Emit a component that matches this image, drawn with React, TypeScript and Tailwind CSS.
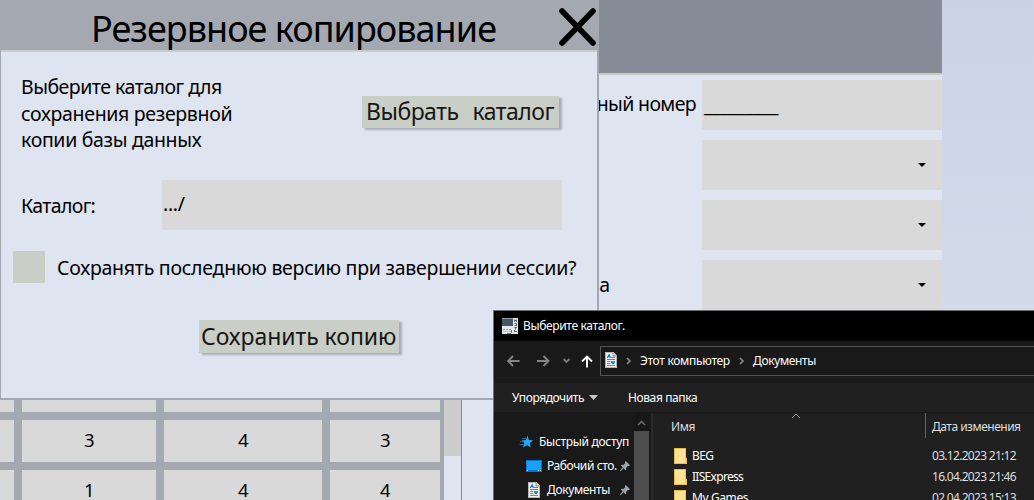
import type { ReactNode } from "react";

function Field({ label, children }: { label?: string; children?: ReactNode }) {
  return (
    <div className="flex h-[50px] items-center justify-end">
      <span className="mr-[6px] pb-[2px] text-[19.5px] leading-[26px] tracking-[-0.65px] whitespace-nowrap">{label}</span>
      <div className="flex h-[50px] w-[240px] shrink-0 items-center bg-[#d9d9d9]">{children}</div>
    </div>
  );
}

function SelectArrow() {
  return (
    <svg className="mr-4 ml-auto" width="8" height="4" viewBox="0 0 8 4" aria-hidden="true">
      <path d="M0 0H8L4 4Z" fill="#000" />
    </svg>
  );
}

function Row({ values }: { values: string[] }) {
  return (
    <div className="flex h-[42px] shrink-0 gap-2">
      <div className="w-[14px] bg-[#d9d9d9]" />
      <Cell width="w-[134px]" value={values[0]} />
      <Cell width="w-[158px]" value={values[1]} />
      <Cell width="w-[110px]" value={values[2]} />
    </div>
  );
}

function Cell({ width, value }: { width: string; value?: string }) {
  return (
    <div className={`${width} bg-[#d9d9d9] text-center text-[18.5px] leading-[40px] tracking-[-0.5px]`}>{value}</div>
  );
}

function DocIcon({ className }: { className?: string }) {
  return (
    <svg className={className} width="12" height="16" viewBox="0 0 12 16" aria-hidden="true">
      <path d="M0 0H8.5L12 3.5V16H0Z" fill="#f4f4f4" />
      <path d="M0.5 0.5H8.3L11.5 3.7V15.5H0.5Z" fill="none" stroke="#b5b5b5" />
      <path d="M8 0.5V4H11.5" fill="#dcdcdc" stroke="#8c8c8c" />
      <path d="M2.2 6L4.2 2.5L5.4 6M3 4.8H5" fill="none" stroke="#1476c6" strokeWidth="1.1" />
      <path d="M6 5.5H10M2 7.5H10" stroke="#2b8fdc" />
      <path d="M2 9.5H5.5M2 11.5H5.5M2 13.5H10" stroke="#7b8793" />
      <path d="M6 9H10V11H6Z" fill="#2d9be0" />
      <path d="M6 12L8 10.5L10 12Z" fill="#45684b" />
    </svg>
  );
}

function FolderIcon() {
  return (
    <svg className="mr-[5px]" width="13" height="16" viewBox="0 0 13 16" aria-hidden="true">
      <path d="M0 0H12V9.5L13 10.5V16H0Z" fill="#e8bd4e" />
      <path d="M1 1H11.2V15H1Z" fill="#ffe393" />
      <path d="M11 10.5H12.5V15.5H10.5Z" fill="#f6cf65" />
    </svg>
  );
}

function Pin() {
  return (
    <svg className="shrink-0" width="10" height="10" viewBox="0 0 10 10" aria-hidden="true">
      <path d="M5.8 0L10 4.2L9 5L8 4.8L6.2 6.7L6.3 8.5L5.5 9.2L0.9 4.5L1.7 3.8L3.4 3.9L5.3 2L5 0.9Z" fill="#9aa5ae" />
      <path d="M3.5 6.5L0.2 9.8" stroke="#9aa5ae" strokeWidth="1.1" />
    </svg>
  );
}

function AppIcon() {
  return (
    <svg width="16" height="16" viewBox="0 0 16 16" aria-hidden="true">
      <path d="M0 0H16V16H0Z" fill="#e3e9ef" />
      <path d="M0 1H11V8H0Z" fill="#445765" />
      <path d="M0 0.5H11" stroke="#8e9ba6" />
      <path d="M1 11.5H3M4 11.5H6M7 11.5H9" stroke="#a0957e" />
      <path d="M1 13.5H9" stroke="#b3c1d1" />
      <path d="M12.5 1.5V4M14.5 1.5V4M12.5 2.5H15M12.5 5.5H15M14.5 5.5V7.5M12.5 7.5H15M12.5 9.5H15M13.5 9.5V11.5M12.5 12V14M12.5 13.5H15" stroke="#5b6874" fill="none" />
      <path d="M9.5 12V15M5 15.5H9" stroke="#6d7984" />
    </svg>
  );
}

function FileRow({ name, date, tracking }: { name: string; date: string; tracking: string }) {
  return (
    <div className="flex h-[21px] shrink-0 items-center pl-[21px] text-white">
      <FolderIcon />
      <span className={`w-[240px] ${tracking}`}>{name}</span>
      <span className="tracking-[-0.7px] text-[#dedede]">{date}</span>
    </div>
  );
}

function CatalogDialog() {
  return (
    <section className="absolute top-[310px] left-[493px] flex h-[190px] w-[541px] flex-col overflow-hidden border-t border-l border-[#6c6f73] bg-[#191919] text-[12px] leading-[16px] whitespace-nowrap text-white">
      <header className="flex h-[30px] shrink-0 items-center bg-black pl-2">
        <AppIcon />
        <span className="ml-[5px] tracking-[-0.35px]">Выберите каталог.</span>
      </header>
      <nav className="flex h-[42px] shrink-0 items-center pb-[2px]">
        <svg className="ml-[13px]" width="64" height="16" viewBox="0 0 64 16" fill="none" aria-hidden="true">
          <path d="M12.5 8H1M6 3L1 8L6 13" stroke="#858585" strokeWidth="1.9" />
          <path d="M30 8H41.5M36.5 3L41.5 8L36.5 13" stroke="#858585" strokeWidth="1.9" />
          <path d="M56.5 6L59.5 9L62.5 6" stroke="#757575" strokeWidth="1.9" />
        </svg>
        <svg className="ml-[10px]" width="12" height="16" viewBox="0 0 12 16" fill="none" aria-hidden="true">
          <path d="M6 14.5V3.5M1 8.5L6 3.5L11 8.5" stroke="#fff" strokeWidth="1.9" />
        </svg>
        <div className="ml-[7px] flex h-[30px] flex-1 items-center border border-r-0 border-[#535353] pl-1">
          <DocIcon className="-mt-[2px]" />
          <svg className="ml-[9px]" width="6" height="8" viewBox="0 0 6 8" fill="none" aria-hidden="true">
            <path d="M1 1L4 4L1 7" stroke="#8a8a8a" strokeWidth="1.6" />
          </svg>
          <span className="ml-[8px] w-[90px] tracking-[-0.3px]">Этот компьютер</span>
          <svg className="ml-[9px]" width="6" height="8" viewBox="0 0 6 8" fill="none" aria-hidden="true">
            <path d="M1 1L4 4L1 7" stroke="#8a8a8a" strokeWidth="1.6" />
          </svg>
          <span className="ml-[8px] tracking-[-0.35px]">Документы</span>
        </div>
      </nav>
      <div className="flex h-[30px] shrink-0 items-center border-b border-[#181818] bg-[#202020] pl-[18px]">
        <span className="w-[77px] tracking-[-0.42px]">Упорядочить</span>
        <svg width="9" height="5" viewBox="0 0 9 5" aria-hidden="true">
          <path d="M0 0H9L4.5 5Z" fill="#c8c8c8" />
        </svg>
        <span className="ml-[30px] tracking-[-0.4px]">Новая папка</span>
      </div>
      <div className="flex min-h-0 flex-1">
        <aside className="flex w-[140px] flex-col pt-[17px]">
          <div className="flex h-6 shrink-0 items-center pl-[25px]">
            <svg width="15" height="14" viewBox="0 0 15 14" aria-hidden="true">
              <path d="M8.6 0.5L9.8 5L14.3 5.2L10.8 8L11.8 12.5L8.2 10.2L4 12.5L5.5 8.3L2.5 5.4L7 5Z" fill="#2aa5f2" />
              <path d="M3 3.5H7M1 6.5H5M0.5 9.5H5" stroke="#167bc4" strokeWidth="0.8" />
            </svg>
            <span className="ml-[5px] tracking-[-0.3px]">Быстрый доступ</span>
          </div>
          <div className="flex h-6 shrink-0 items-center pl-8">
            <svg className="shrink-0" width="16" height="12" viewBox="0 0 16 12" aria-hidden="true">
              <path d="M0 0H16V12H0Z" fill="#0877d4" />
              <path d="M1 1H15V10H1Z" fill="#1ba0f8" />
              <path d="M1 10.5H2M12 10.5H13M14 10.5H15" stroke="#dff1ff" />
            </svg>
            <span className="ml-[5px] w-[73px] shrink-0 tracking-[-0.4px]">Рабочий сто.</span>
            <Pin />
          </div>
          <div className="flex h-6 shrink-0 items-center pl-[34px]">
            <DocIcon className="shrink-0" />
            <span className="ml-[7px] w-[73px] shrink-0 tracking-[-0.35px]">Документы</span>
            <Pin />
          </div>
        </aside>
        <div className="flex w-[15px] flex-col bg-[#171717]">
          <svg className="mt-[7px] mb-[5px] ml-[3px]" width="9" height="6" viewBox="0 0 9 6" fill="none" aria-hidden="true">
            <path d="M1 5L4.5 1.5L8 5" stroke="#686868" strokeWidth="1.7" />
          </svg>
          <div className="flex-1 bg-[#4d4d4d]" />
        </div>
        <div className="ml-[2px] w-[2px] bg-[#2b2b2b]" />
        <div className="flex flex-1 flex-col bg-[#202020]">
          <div className="flex h-[32px] shrink-0 text-[#dedede]">
            <span className="w-[138px] pt-[6px] pl-[18px] tracking-[-0.4px]">Имя</span>
            <svg width="10" height="6" viewBox="0 0 10 6" fill="none" aria-hidden="true">
              <path d="M1 5L5 1L9 5" stroke="#999" />
            </svg>
            <span className="ml-[124px] h-[25px] border-l border-[#636363] pt-[6px] pl-[6px] tracking-[-0.5px]">Дата изменения</span>
          </div>
          <FileRow name="BEG" date="03.12.2023 21:12" tracking="tracking-[-0.6px]" />
          <FileRow name="IISExpress" date="16.04.2023 21:46" tracking="tracking-[-0.7px]" />
          <FileRow name="My Games" date="02.04.2023 15:13" tracking="tracking-[-0.4px]" />
        </div>
      </div>
    </section>
  );
}

function BackupModal() {
  return (
    <section className="absolute top-0 left-0 flex h-[400px] w-[599px] flex-col border-r-2 border-b-2 border-l border-[#a4a8b1] bg-[#dee4f0]">
      <header className="flex h-[52px] shrink-0 items-start justify-between overflow-hidden border-b-2 border-[#c9cdc6] bg-[#a4a8b1]">
        <h1 className="ml-[90px] text-[36px] leading-[58px] tracking-[-0.97px] whitespace-nowrap">Резервное копирование</h1>
        <svg className="mt-[8px] -mr-px shrink-0" width="40" height="38" viewBox="0 0 40 38" aria-hidden="true">
          <path d="M4 3L35 35M35 3L4 35" stroke="#000" strokeWidth="5.6" strokeLinecap="round" />
        </svg>
      </header>
      <div className="mt-[22px] flex items-start justify-between pr-[38px] pl-5">
        <p className="text-[19.5px] leading-[26.6px] whitespace-nowrap">
          <span className="block tracking-[-0.5px]">Выберите каталог для</span>
          <span className="block tracking-[-0.33px]">сохранения резервной</span>
          <span className="block tracking-[-0.33px]">копии базы данных</span>
        </p>
        <button className="mt-[22px] flex h-[32px] w-[197px] items-center justify-between bg-[#c9cec6] pr-[5px] pb-[2px] pl-1 text-[23px] leading-[28px] text-[#161616] shadow-[3px_2px_2px_#a5adb9]">
          <span className="tracking-[-0.5px]">Выбрать</span>
          <span className="tracking-[-0.5px]">каталог</span>
        </button>
      </div>
      <div className="mt-[26px] flex h-[50px] items-center pl-5">
        <label className="w-[141px] pt-[2px] text-[19.5px] leading-[26px] tracking-[-0.65px]">Каталог:</label>
        <div className="h-[50px] w-[400px] bg-[#d9d9d9] pl-px text-[19.5px] leading-[48px] tracking-[-0.3px]">.../</div>
      </div>
      <div className="mt-5 flex items-center pl-3">
        <div className="mt-px size-8 bg-[#c9cec6]" />
        <span className="ml-3 pt-[4px] text-[19.5px] leading-[26px] tracking-[-0.25px] whitespace-nowrap">Сохранять последнюю версию при завершении сессии?</span>
      </div>
      <button className="mt-[37px] ml-[198px] h-[33px] w-[200px] bg-[#c9cec6] pl-[2px] text-left text-[23px] leading-[30px] tracking-[-0.05px] whitespace-nowrap text-[#161616] shadow-[3px_2px_2px_#a5adb9]">
        Сохранить копию
      </button>
    </section>
  );
}

export default function App() {
  return (
    <main className="relative h-[500px] w-[1034px] overflow-hidden bg-linear-to-b from-[#c9d3e4] to-[#d8e0ed] font-['Noto_Sans',sans-serif] text-black">
      <div className="flex h-full w-[942px] flex-col bg-[#dee4f0]">
        <div className="h-[75px] shrink-0 border-b-2 border-[#c9cdc6] bg-[#868c98]" />
        <div className="flex flex-1">
          <div className="flex w-[462px] items-end border-r border-[#6a93b8]">
            <div className="flex h-[100px] w-[444px] flex-col gap-2 overflow-hidden bg-[#a4a8b1]">
              <div className="-mt-[30px] shrink-0"><Row values={[]} /></div>
              <Row values={["3", "4", "3"]} />
              <Row values={["1", "4", "4"]} />
            </div>
            <div className="h-[100px] w-[17px]">
              <div className="h-[56px] bg-[#cdcdcd]" />
            </div>
          </div>
          <div className="flex flex-1 flex-col gap-[10px] pt-[5px]">
            <Field label="ный номер">
              <span className="pl-[2px] text-[19px] leading-[26px] tracking-[-0.2px]">_________</span>
            </Field>
            <Field><SelectArrow /></Field>
            <Field><SelectArrow /></Field>
            <div className="flex">
              <span className="w-[148px] pt-[12px] text-right text-[19.5px] leading-[26px]">а</span>
              <div className="ml-auto flex h-[50px] w-[240px] items-center bg-[#d9d9d9]"><SelectArrow /></div>
            </div>
          </div>
        </div>
      </div>
      <BackupModal />
      <CatalogDialog />
    </main>
  );
}
